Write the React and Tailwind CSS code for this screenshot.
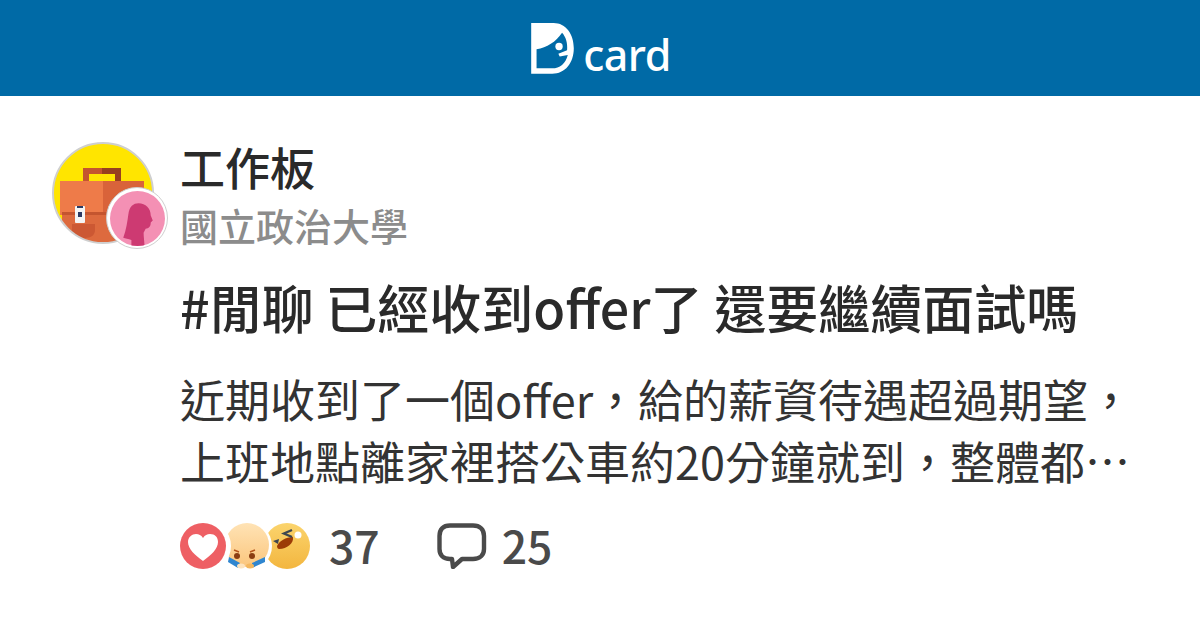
const cjk = { fontFamily: '"Noto Sans CJK TC", "Noto Sans", sans-serif' };

const DLogo = () => (
  <svg width="44" height="51" viewBox="65 37 130 152">
    <path
      fillRule="evenodd"
      fill="#fff"
      d="M65 37H132C168 37 192 70 192 112C192 156 166 188 128 188H65ZM81 115V172H128C150 172 168 158 174 132L150 137L146 129L172 118C174 96 168 78 157 66C138 94 112 110 81 115Z"
    />
    <circle cx="148" cy="107" r="11" fill="#fff" />
  </svg>
);

const Avatar = () => (
  <div className="relative w-[102px] h-[102px] shrink-0">
    <svg width="102" height="102" viewBox="0 0 102 102">
      <defs>
        <clipPath id="board">
          <circle cx="51" cy="51" r="50" />
        </clipPath>
      </defs>
      <circle cx="51" cy="51" r="50" fill="#ffe500" />
      <g clipPath="url(#board)">
        <path d="M31 39V26H69V39H63V32H37V39Z" fill="#c4552f" />
        <path d="M50 26H69V39H63V32H50Z" fill="#97401f" />
        <rect x="8" y="39" width="43" height="34" fill="#ee7b49" />
        <rect x="51" y="39" width="41" height="34" fill="#d9633a" />
        <path d="M10 73H92V102H10Z" fill="#dd6a3e" />
        <rect x="10" y="70" width="82" height="3" fill="#c4552f" />
        <path d="M20 82H43V88C43 93 39 96 33 96H28C23 96 20 93 20 88Z" fill="#cc5833" />
        <rect x="23" y="64" width="10" height="17" rx="1" fill="#f4f4f4" />
        <rect x="26" y="70" width="4" height="5" fill="#2c3a63" />
        <rect x="25" y="64" width="6" height="2" fill="#2c3a63" />
      </g>
      <circle cx="51" cy="51" r="50" fill="none" stroke="#cfcfcf" strokeWidth="2" />
    </svg>
    <div className="absolute left-[54px] top-[45px] w-[62px] h-[62px] rounded-full bg-white border border-[#cfcfcf] flex items-center justify-center">
      <svg width="55" height="55" viewBox="0 0 54 54">
        <defs>
          <clipPath id="badge">
            <circle cx="27" cy="27" r="27" />
          </clipPath>
        </defs>
        <circle cx="27" cy="27" r="27" fill="#f490b4" />
        <path
          clipPath="url(#badge)"
          d="M21 58V48C18 47 15 47 13 46C16 38 17 30 18 23C19 15 23 12 28 12C35 12 40 17 40 24L42 29L40 31C40 35 38 37 35 37L33 41C33 46 34 50 34 58Z"
          fill="#cd3a72"
        />
      </svg>
    </div>
  </div>
);

const Reactions = () => (
  <svg width="132" height="48" viewBox="0 0 132 48" className="shrink-0">
    <defs>
      <linearGradient id="sad" x1="0" y1="0" x2="0" y2="1">
        <stop offset="0" stopColor="#ffe3b5" />
        <stop offset="1" stopColor="#fbc67d" />
      </linearGradient>
      <linearGradient id="laugh" x1="0" y1="0" x2="0" y2="1">
        <stop offset="0" stopColor="#fbd46d" />
        <stop offset="1" stopColor="#f3b63f" />
      </linearGradient>
    </defs>
    <circle cx="107" cy="24" r="23" fill="url(#laugh)" />
    <path d="M97 24C99 19 106 15 113 15C114 21 107 27 99 27C98 27 97 26 97 24Z" fill="#9c3b06" />
    <path d="M112 8L104 11.5L112 15" stroke="#3d4650" strokeWidth="2.4" fill="none" />
    <path d="M93 19L99 17L98 22Z" fill="#3d4650" />
    <circle cx="118" cy="13" r="3.5" fill="#fff" />
    <circle cx="67" cy="24" r="25" fill="#fff" />
    <circle cx="67" cy="23" r="22" fill="url(#sad)" />
    <circle cx="24" cy="24" r="27" fill="#fff" />
    <circle cx="23" cy="24" r="23" fill="#ee5f64" />
    <path
      d="M23 39C15 33 8 27 8 20C8 15 12 12 16 12C19 12 21 13 23 16C25 13 27 12 30 12C35 12 38 15 38 20C38 27 31 33 23 39Z"
      fill="#fff"
    />
    <circle cx="57" cy="34" r="3" fill="#8a3d12" />
    <circle cx="72" cy="34" r="3" fill="#8a3d12" />
    <path d="M54 28L59 30M75 28L70 30" stroke="#b5541c" strokeWidth="1.4" />
    <path d="M49 35L60 41L58 46L48 40Z" fill="#2f86d0" />
    <path d="M85 35L72 41L72 46L85 40Z" fill="#2f86d0" />
    <ellipse cx="61" cy="44" rx="4" ry="2.5" fill="#fde3bd" />
    <ellipse cx="70" cy="44" rx="4" ry="2.5" fill="#f4b75e" />
  </svg>
);

const CommentIcon = () => (
  <svg width="50" height="46" viewBox="0 0 50 46" fill="none" className="shrink-0">
    <path
      d="M13 2.5H36C43 2.5 47 6.5 47 13V26C47 32 43 36 36 36H25L16 44L15 36H13C6 36 2.5 32 2.5 26V13C2.5 6.5 6 2.5 13 2.5Z"
      stroke="#4a4a4a"
      strokeWidth="4.4"
      strokeLinejoin="round"
    />
  </svg>
);

export default function App() {
  return (
    <div className="w-[1200px] h-[630px] bg-white overflow-hidden" style={cjk} lang="zh-TW">
      <header className="h-24 bg-[#006aa6] flex items-center justify-center gap-[8px] pl-[2px] text-white">
        <DLogo />
        <span className="text-[43px] leading-none font-medium tracking-[-0.5px] mt-[12px] font-['Noto_Sans']">card</span>
      </header>

      <main className="flex pl-[52px] pt-[46px]">
        <Avatar />
        <div className="ml-[26px] w-[960px] -mt-[2px]">
          <div className="text-[45px] leading-[54px] font-medium text-[#2a2a2a]">工作板</div>
          <div className="text-[38px] leading-[50px] font-medium text-[#8c8c8c] mt-[6px]">國立政治大學</div>
          <h1 className="text-[52px] leading-[62px] font-medium text-[#2a2a2a] mt-[26px]">
            #閒聊 已經收到offer了 還要繼續面試嗎
          </h1>
          <p className="text-[45px] leading-[62px] text-[#333333] mt-[30px]">
            {"近期收到了一個offer\uFF0C給的薪資待遇超過期望\uFF0C"}
            <br />
            {"上班地點離家裡搭公車約20分鐘就到\uFF0C整體都…"}
          </p>
          <div className="flex items-center mt-[30px] text-[44.5px] leading-[50px] font-medium text-[#4a4a4a]">
            <Reactions />
            <span className="ml-[17px] -mt-[2px]">37</span>
            <span className="ml-[57px]">
              <CommentIcon />
            </span>
            <span className="ml-[15px] -mt-[2px]">25</span>
          </div>
        </div>
      </main>
    </div>
  );
}
